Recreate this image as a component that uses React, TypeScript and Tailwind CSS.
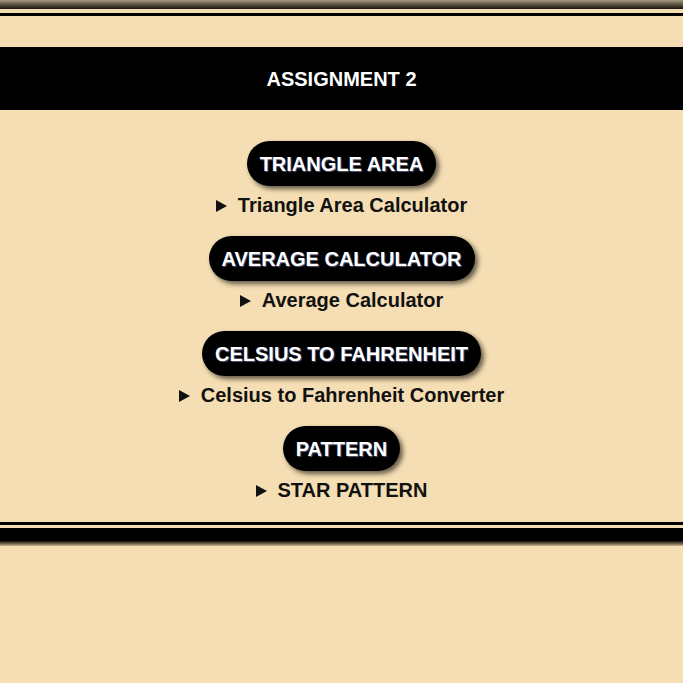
import React from 'react';

// sections van de assignment pagina
const sections = [
    { title: 'TRIANGLE AREA', summary: 'Triangle Area Calculator' },
    { title: 'AVERAGE CALCULATOR', summary: 'Average Calculator' },
    { title: 'CELSIUS TO FAHRENHEIT', summary: 'Celsius to Fahrenheit Converter' },
    { title: 'PATTERN', summary: 'STAR PATTERN' },
];

const App: React.FC = () => {
    return (
        <div className="min-h-screen bg-[#f5deb3] font-['Liberation_Sans',Arial,sans-serif]">
            {/* bovenrand */}
            <div className="h-[9px] bg-gradient-to-b from-[#a89a80] to-[#1a140c]" />
            <div className="h-[4px]" />
            <div className="h-[3px] bg-black" />

            {/* titelbalk */}
            <div className="mt-[31px] h-[63px] bg-black flex items-center justify-center">
                <h1 className="text-white text-[20px] font-bold">ASSIGNMENT 2</h1>
            </div>

            <div className="flex flex-col items-center pt-[31px]">
                {sections.map((s) => (
                    <div key={s.title} className="flex flex-col items-center mb-[19px] last:mb-[20px]">
                        <button className="h-[45px] px-[13px] rounded-full bg-black text-white text-[20px] font-bold shadow-[3px_3px_5px_rgba(0,0,0,0.6)] [text-shadow:1px_1px_1px_rgba(120,120,160,0.7)]">
                            {s.title}
                        </button>
                        <div className="mt-[8px] flex items-center gap-[11px] text-[#111] text-[20px] font-bold leading-[23px]">
                            <svg width="11" height="12" viewBox="0 0 11 12">
                                <path d="M0 0 L11 6 L0 12 Z" fill="#111" />
                            </svg>
                            <span>{s.summary}</span>
                        </div>
                    </div>
                ))}
            </div>

            {/* onderrand */}
            <div className="h-[3px] bg-black" />
            <div className="h-[3px]" />
            <div className="h-[13px] bg-black" />
            <div className="h-[5px] bg-gradient-to-b from-[#1a140c] to-[#c9b590]" />
        </div>
    );
};

export default App;
